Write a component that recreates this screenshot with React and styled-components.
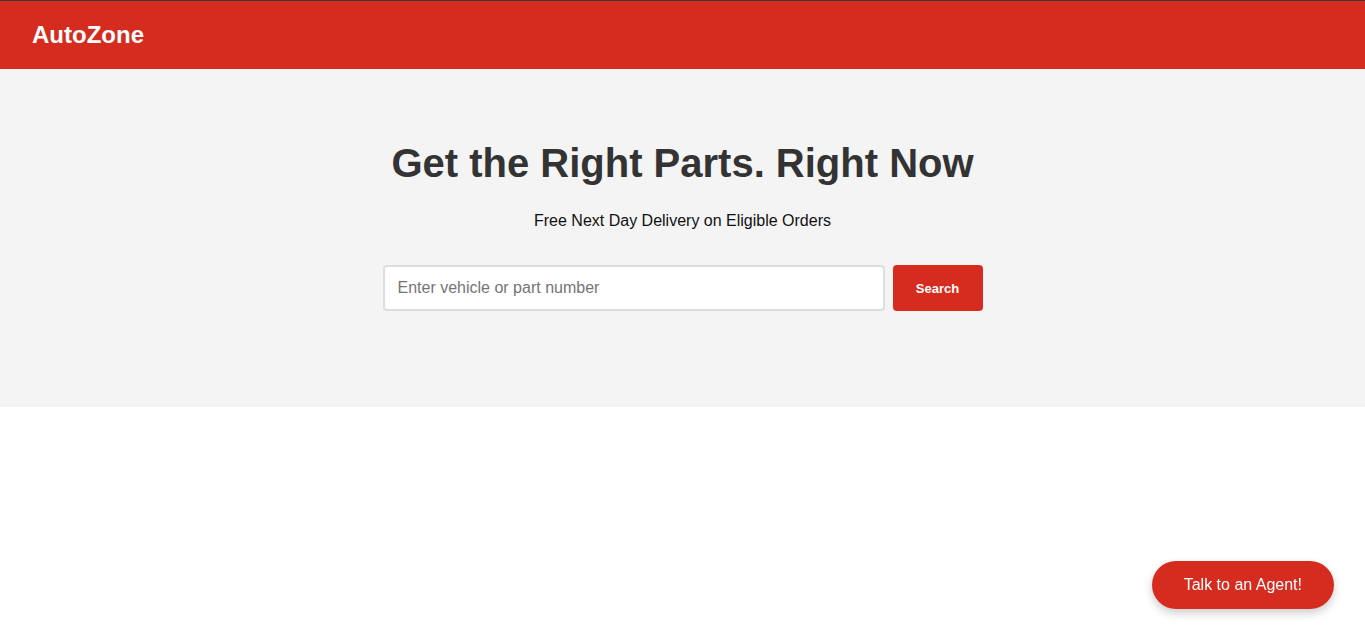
import styled, { createGlobalStyle } from "styled-components";

const GlobalStyle = createGlobalStyle`
  * {
    box-sizing: border-box;
  }
  body {
    margin: 0;
    font-family: "Liberation Sans", Arial, sans-serif;
    background: #ffffff;
    border-top: 1px solid #3a3a3a;
  }
`

const Header = styled.header`
  height: 68px;
  display: flex;
  align-items: center;
  padding: 0 32px;
  background-color: #d62b1f;
`

const Logo = styled.div`
  font-size: 24px;
  font-weight: bold;
  color: #ffffff;
`

const Hero = styled.section`
  background-color: #f4f4f4;
  padding: 72px 20px 96px;
  display: flex;
  flex-direction: column;
  align-items: center;
  text-align: center;
`

const Title = styled.h1`
  margin: 0 0 26px;
  font-size: 40px;
  font-weight: bold;
  color: #333333;
`

const Subtitle = styled.p`
  margin: 0 0 35px;
  font-size: 16px;
  color: #111111;
`

const SearchForm = styled.form`
  width: 600px;
  display: flex;
  gap: 8px;
`

const SearchInput = styled.input`
  flex: 1;
  height: 46px;
  padding: 0 13px;
  border: 2px solid #dddddd;
  border-radius: 4px;
  font-family: inherit;
  font-size: 16px;
  color: #333333;
  background: #ffffff;
  outline: none;

  &::placeholder {
    color: #757575;
  }
`

const SearchButton = styled.button`
  width: 90px;
  height: 46px;
  border: none;
  border-radius: 4px;
  background-color: #d62b1f;
  color: #ffffff;
  font-family: inherit;
  font-size: 13px;
  font-weight: bold;
  cursor: pointer;
`

const AgentButton = styled.button`
  position: fixed;
  right: 31px;
  bottom: 32px;
  padding: 15px 32px;
  border: none;
  border-radius: 25px;
  background-color: #d62b1f;
  color: #ffffff;
  font-family: inherit;
  font-size: 16px;
  box-shadow: 0 4px 10px rgba(0, 0, 0, 0.2);
  cursor: pointer;
`

export default function App() {
  return (
    <>
      <GlobalStyle />
      <Header>
        <Logo>AutoZone</Logo>
      </Header>
      <Hero>
        <Title>Get the Right Parts. Right Now</Title>
        <Subtitle>Free Next Day Delivery on Eligible Orders</Subtitle>
        <SearchForm onSubmit={(e) => e.preventDefault()}>
          <SearchInput type="text" placeholder="Enter vehicle or part number" />
          <SearchButton type="submit">Search</SearchButton>
        </SearchForm>
      </Hero>
      <AgentButton>Talk to an Agent!</AgentButton>
    </>
  );
}
